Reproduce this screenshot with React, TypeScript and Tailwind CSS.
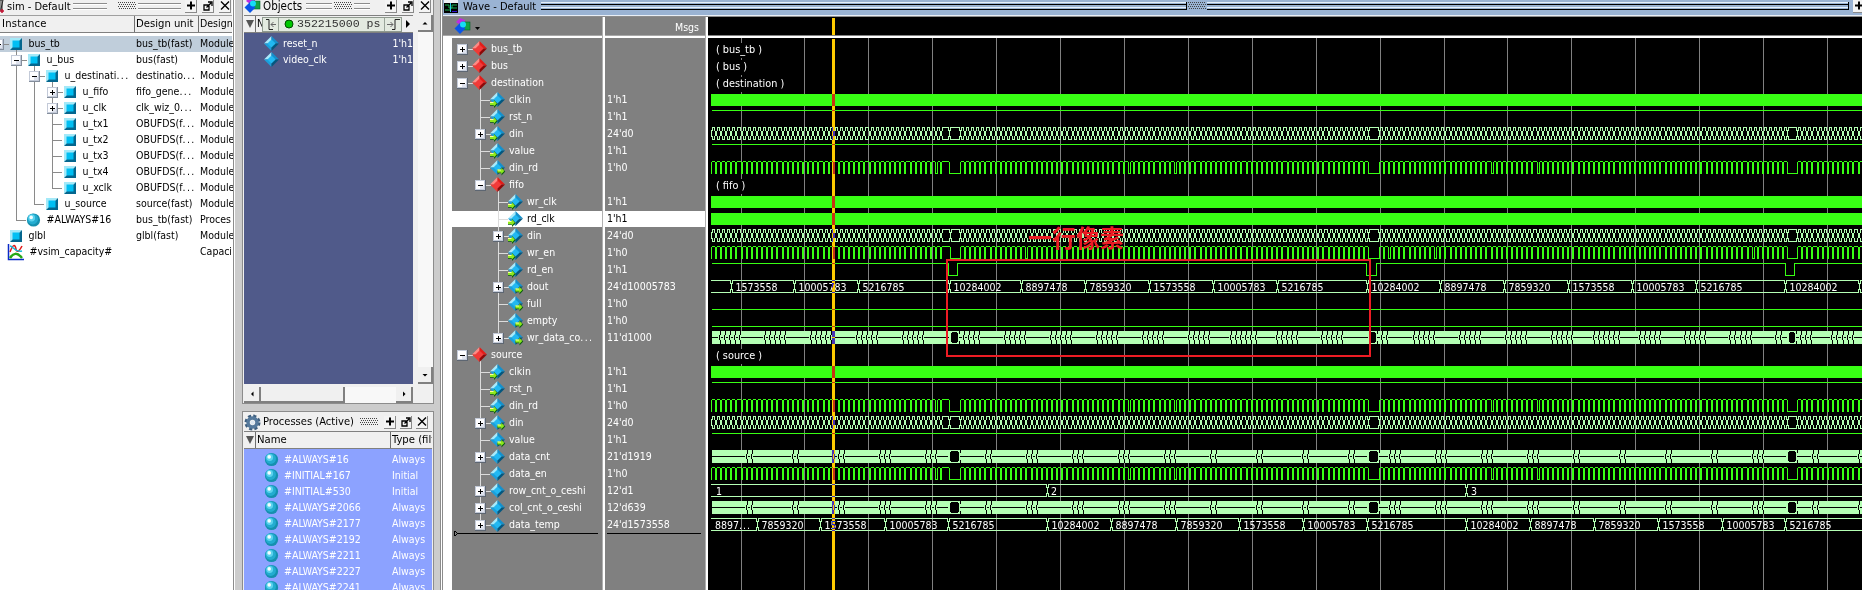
import React from "react";

type Guide = { full?: number[]; end?: number };

/* ---------- small shared pieces ---------- */

function Label({ text }: { text: string }) {
  if (!text.endsWith("...")) return <>{text}</>;
  return (
    <>
      {text.slice(0, -3)}
      <span className="tracking-[1.4px]">...</span>
    </>
  );
}

function Expander({ x, y, open, dark }: { x: number; y: number; open: boolean; dark?: boolean }) {
  return (
    <g shapeRendering="crispEdges">
      <rect x={x} y={y} width={11} height={11} rx={1} fill={dark ? "#5d6672" : "#848e9c"} />
      <rect x={x} y={y} width={10} height={10} fill="#c3cad8" />
      <rect x={x + 1} y={y + 1} width={8} height={8} fill="#fdfdff" />
      <rect x={x + 5} y={y + 6} width={4} height={3} fill="#dfe3ee" />
      <rect x={x + 3} y={y + 5} width={5} height={1} fill="#000" />
      {!open && <rect x={x + 5} y={y + 3} width={1} height={5} fill="#000" />}
    </g>
  );
}

function ModuleIcon({ x }: { x: number }) {
  return (
    <g>
      <path d={`M${x} 2h12l-12 12z`} fill="#a4e9f8" />
      <path d={`M${x + 12} 2v12h-12z`} fill="#04668e" />
      <rect x={x + 2.5} y={4.5} width={7} height={7} fill="#00bff3" />
    </g>
  );
}

function Ball({ cx, cy }: { cx: number; cy: number }) {
  return (
    <g>
      <circle cx={cx} cy={cy} r={6.6} fill="#1590ae" />
      <circle cx={cx - 0.8} cy={cy - 0.9} r={5.3} fill="#23acd0" />
      <circle cx={cx - 1.8} cy={cy - 2} r={3.4} fill="#5cd3ee" />
      <circle cx={cx - 2.3} cy={cy - 2.6} r={1.8} fill="#f2fdff" />
    </g>
  );
}

function Diamond({ x, y, kind }: { x: number; y: number; kind: "red" | "blue" | "in" | "out" }) {
  const c =
    kind === "red"
      ? { tl: "#ff8a84", tr: "#e31c18", bl: "#f03a34", br: "#8e0808", m: "#f23a3a" }
      : { tl: "#a8eafb", tr: "#1490cc", bl: "#1aa0dc", br: "#04577f", m: "#22b8f2" };
  return (
    <g>
      <path d={`M${x + 7.5} ${y}L${x} ${y + 7.5}h7.5z`} fill={c.tl} />
      <path d={`M${x + 7.5} ${y}L${x + 15} ${y + 7.5}h-7.5z`} fill={c.tr} />
      <path d={`M${x + 7.5} ${y + 15}L${x} ${y + 7.5}h7.5z`} fill={c.bl} />
      <path d={`M${x + 7.5} ${y + 15}L${x + 15} ${y + 7.5}h-7.5z`} fill={c.br} />
      <path d={`M${x + 7.5} ${y + 3.4}l4.1 4.1-4.1 4.1-4.1-4.1z`} fill={c.m} />
      {kind === "in" && <Arrow x={x} y={y + 8} />}
      {kind === "out" && <Arrow x={x + 7.5} y={y + 7.5} />}
    </g>
  );
}

function Arrow({ x, y }: { x: number; y: number }) {
  return (
    <g>
      <path d={`M${x} ${y + 2.5}h4v-2.5l3.8 4-3.8 4v-2.3h-4z`} fill="#0c5a12" />
      <path d={`M${x} ${y + 2}h3.8v-1.7l3 3.2-3 3v-1.6h-3.8z`} fill="#8eea1e" />
      <rect x={x} y={y + 2} width={3.5} height={1} fill="#fbff9c" />
    </g>
  );
}

function ShapesIcon({ className }: { className?: string }) {
  return (
    <svg width="17" height="17" viewBox="0 0 17 17" className={className}>
      <path d="M2 4l4-4 5 2v3l-5 2z" fill="#c02ce0" />
      <rect x="8" y="4" width="8" height="8" fill="#12a444" stroke="#055e28" strokeWidth=".6" />
      <path d="M6 5l5.500 5.500L6 16 .5 10.500z" fill="#0a55e8" />
      <circle cx="9" cy="6.500" r="3" fill="#16dcf6" />
    </svg>
  );
}

function TitleButton({ kind }: { kind: "plus" | "pop" | "close" }) {
  return (
    <div className="h-[13px] w-3 shrink-0 border-r border-b border-[#8a8a8a] bg-[#f4f4f4]">
      <svg width="12" height="12" viewBox="0 0 12 12" fill="none" stroke="#000">
        {kind === "plus" && <path d="M2 5.500h8M6 1.500v8" strokeWidth="2" />}
        {kind === "pop" && <path d="M2 5h5v5H2zM4.500 7.500L9 3M6 2h4v4" strokeWidth="1.300" />}
        {kind === "close" && <path d="M2 1.500l8 8M10 1.500l-8 8" strokeWidth="1.400" />}
      </svg>
    </div>
  );
}

function Grip({ className = "" }: { className?: string }) {
  return (
    <svg width="18" height="8" viewBox="0 0 18 8" className={`shrink-0 ${className}`} shapeRendering="crispEdges">
      {[0, 2, 4, 6].map((y) =>
        [0, 1, 2, 3, 4, 5, 6, 7, 8].map((i) => (
          <rect key={`${y}-${i}`} x={i * 2 + ((y / 2) % 2)} y={y} width={1} height={1} fill="#444" />
        )),
      )}
    </svg>
  );
}

function Rails({ className = "" }: { className?: string }) {
  return (
    <div className={`h-[6px] shrink-0 border-y border-[#8c8c8c] shadow-[0_1px_0_#fff] ${className}`}>
      <div className="h-px bg-white" />
    </div>
  );
}

/* ---------- sim panel ---------- */

const simRows: {
  name: string; unit: string; type: string; d: number;
  icon?: "ball" | "chart"; exp?: "-" | "+"; g?: Guide; hot?: boolean; child?: boolean;
}[] = [
  { name: "bus_tb", unit: "bus_tb(fast)", type: "Module", d: 0, exp: "-", hot: true, child: true },
  { name: "u_bus", unit: "bus(fast)", type: "Module", d: 1, exp: "-", g: { full: [16] }, child: true },
  { name: "u_destinati...", unit: "destinatio...", type: "Module", d: 2, exp: "-", g: { full: [16, 34] }, child: true },
  { name: "u_fifo", unit: "fifo_gene...", type: "Module", d: 3, exp: "+", g: { full: [16, 34, 52] } },
  { name: "u_clk", unit: "clk_wiz_0...", type: "Module", d: 3, exp: "+", g: { full: [16, 34, 52] } },
  { name: "u_tx1", unit: "OBUFDS(f...", type: "Module", d: 3, g: { full: [16, 34, 52] } },
  { name: "u_tx2", unit: "OBUFDS(f...", type: "Module", d: 3, g: { full: [16, 34, 52] } },
  { name: "u_tx3", unit: "OBUFDS(f...", type: "Module", d: 3, g: { full: [16, 34, 52] } },
  { name: "u_tx4", unit: "OBUFDS(f...", type: "Module", d: 3, g: { full: [16, 34, 52] } },
  { name: "u_xclk", unit: "OBUFDS(f...", type: "Module", d: 3, g: { full: [16, 34], end: 52 } },
  { name: "u_source", unit: "source(fast)", type: "Module", d: 2, g: { full: [16], end: 34 } },
  { name: "#ALWAYS#16", unit: "bus_tb(fast)", type: "Proces", d: 1, icon: "ball", g: { end: 16 } },
  { name: "glbl", unit: "glbl(fast)", type: "Module", d: 0 },
  { name: "#vsim_capacity#", unit: "", type: "Capaci", d: 0, icon: "chart" },
];

function SimPanel() {
  return (
    <section className="flex w-[234px] shrink-0 flex-col overflow-hidden border-r border-[#8c8c8c] bg-white pr-px">
      <div className="flex h-[15px] shrink-0 items-start bg-[#f0f0f0]">
        <svg width="7" height="14" className="shrink-0">
          <path d="M0 0h2v10H0zM3 0L1 9" stroke="#222" fill="#fff" />
          <path d="M0 11h4M2 9v4" stroke="#c01030" strokeWidth="1.500" />
        </svg>
        <span className="w-[66px] shrink-0 text-[11px] leading-[13px] whitespace-nowrap">sim - Default</span>
        <Rails className="mt-[3px] w-[34px]" />
        <Grip className="mt-[2px] ml-[11px]" />
        <Rails className="mt-[3px] ml-[2px] w-[43px]" />
        <div className="ml-[4px] flex gap-[5px]">
          <TitleButton kind="plus" />
          <TitleButton kind="pop" />
          <TitleButton kind="close" />
        </div>
      </div>
      <div className="flex h-[18px] shrink-0 items-center border-t border-b border-t-[#a0a0a0] border-b-[#808080] bg-[#f0f0f0] text-[11.2px]">
        <span className="flex h-full w-[135px] shrink-0 items-center border-r border-[#707070] pl-[2px] tracking-[0.25px]">Instance</span>
        <span className="flex h-full w-[64px] shrink-0 items-center border-r border-[#707070] pl-px whitespace-nowrap">Design unit</span>
        <span className="pl-px text-[10.5px] whitespace-nowrap">Design</span>
      </div>
      <div className="flex flex-col pt-[3px]">
        {simRows.map((r) => {
          const ix = 10 + 18 * r.d;
          const s = r.g?.full ? r.g.full[r.g.full.length - 1] : 0;
          return (
            <div key={r.name} className={r.hot ? "flex h-4 bg-[#c0cedb]" : "flex h-4"}>
              <div className="relative w-[136px] shrink-0">
                <svg width="134" height="16" className="absolute top-0 left-0 overflow-visible">
                  <g fill="#8a8a8a" shapeRendering="crispEdges">
                    {r.g?.full?.map((x) => <rect key={x} x={x} y={0} width={1} height={16} />)}
                    {r.g?.end && <rect x={r.g.end} y={0} width={1} height={8} />}
                    {r.g && <rect x={r.g.end ?? s} y={8} width={10} height={1} />}
                    {r.exp && <rect x={ix - 7} y={8} width={6} height={1} />}
                    {r.child && <rect x={ix + 6} y={13} width={1} height={3} />}
                  </g>
                  {r.exp && <Expander x={ix - 17} y={3} open={r.exp === "-"} />}
                  {!r.icon && <ModuleIcon x={ix} />}
                  {r.icon === "ball" && <Ball cx={33.5} cy={8} />}
                  {r.icon === "chart" && (
                    <g fill="none" strokeWidth="1.500">
                      <path d="M8.500 0v15.500H24" stroke="#0a2ac8" />
                      <path d="M10 8c3-8 5-8 6-3s4 1 6-3" stroke="#e01818" />
                      <path d="M10 2c3 0 5 7 12 5" stroke="#18b8d8" />
                      <path d="M10 14c3-5 7-6 12 0" stroke="#28a818" strokeWidth="2.500" />
                    </g>
                  )}
                </svg>
                <span className="block leading-[15px] whitespace-nowrap" style={{ paddingLeft: r.icon === "chart" ? 29.5 : ix + 18.5 }}>
                  <Label text={r.name} />
                </span>
              </div>
              <span className="w-[64px] shrink-0 leading-[15px] whitespace-nowrap"><Label text={r.unit} /></span>
              <span className="leading-[15px] whitespace-nowrap">{r.type}</span>
            </div>
          );
        })}
      </div>
    </section>
  );
}

/* ---------- objects + processes ---------- */

function ScrollButton({ dir, className }: { dir: "up" | "down" | "left" | "right"; className: string }) {
  const p = {
    up: "M4.500 8.500h5L7 6z",
    down: "M4.500 6h5L7 8.500z",
    left: "M8.500 4.500v5L6 7z",
    right: "M6 4.500v5L8.500 7z",
  }[dir];
  return (
    <div className={`flex shrink-0 items-center justify-center border-r-2 border-b-2 border-[#808080] bg-[#f0f0f0] ${className}`}>
      <svg width="14" height="14">
        <path d={p} fill="#000" />
      </svg>
    </div>
  );
}

function ObjectsPanel() {
  return (
    <section className="flex h-[404px] w-[192px] shrink-0 flex-col border-x border-b border-[#8c8c8c] bg-[#f0f0f0]">
      <div className="flex h-[15px] shrink-0 items-start">
        <ShapesIcon className="mt-[-3px] ml-px" />
        <span className="ml-[2px] w-[43px] text-[11.5px] leading-[13px]">Objects</span>
        <Rails className="mt-[3px] w-[26px]" />
        <Grip className="mx-[2px] mt-[2px]" />
        <Rails className="mt-[3px] w-[16px]" />
        <div className="ml-[15px] flex gap-[5px]">
          <TitleButton kind="plus" />
          <TitleButton kind="pop" />
          <TitleButton kind="close" />
        </div>
      </div>
      <div className="flex grow pl-px">
        <div className="flex w-[169px] flex-col overflow-hidden">
          <div className="flex h-[18px] shrink-0 items-center border-t border-b border-[#808080]">
            <span className="flex h-full w-[12px] shrink-0 items-center justify-center border-r border-[#707070]">
              <svg width="10" height="10"><path d="M1 1h8L5 9z" fill="#555" /></svg>
            </span>
            <span className="w-[6px] shrink-0 overflow-hidden pl-px">N</span>
            <div className="flex h-[15px] w-[140px] shrink-0 items-center border border-[#8f9a8f] bg-[#e3eae0]">
              <svg width="16" height="13" className="shrink-0 border-r border-[#9aa59a]" fill="none" stroke="#222">
                <path d="M3 1.500h3v10h4" />
                <path d="M13 6.500H8M10.500 4L8 6.500l2.500 2.500" stroke="#666" />
              </svg>
              <svg width="18" height="13" className="shrink-0"><circle cx="10" cy="6" r="4" fill="#00c800" stroke="#004a00" /></svg>
              <span className="w-[87px] shrink-0 font-['Liberation_Mono',monospace] text-[11.6px] leading-3 whitespace-nowrap text-[#333]">352215000 ps</span>
              <svg width="17" height="13" className="shrink-0 border-l border-[#9aa59a]" fill="none" stroke="#222">
                <path d="M7 11.500h3v-10h5" />
                <path d="M2 6.500h6M5.500 4L8 6.500 5.500 9" stroke="#666" />
              </svg>
            </div>
            <svg width="10" height="12" className="shrink-0"><path d="M4 2v8l4-4z" fill="#000" /></svg>
          </div>
          <div className="flex h-[351px] flex-col bg-[#505a8a] pt-[3px] text-white">
            {["reset_n", "video_clk"].map((n) => (
              <div key={n} className="flex h-4 pl-[20px]">
                <svg width="15" height="16" className="shrink-0"><Diamond x={0} y={0} kind="blue" /></svg>
                <span className="ml-[4px] w-[110px] leading-[15px]">{n}</span>
                <span className="leading-[15px] whitespace-nowrap">1'h1</span>
              </div>
            ))}
          </div>
          <div className="mt-[3px] flex h-[16px] bg-[#f8f8f8]">
            <ScrollButton dir="left" className="w-[17px]" />
            <div className="w-[84px] border-r-2 border-b-2 border-[#808080] bg-[#f0f0f0]" />
            <div className="grow" />
            <ScrollButton dir="right" className="w-[17px]" />
          </div>
        </div>
        <div className="ml-[5px] flex h-[369px] w-[15px] flex-col justify-between bg-[#f8f8f8]">
          <ScrollButton dir="up" className="h-[17px]" />
          <ScrollButton dir="down" className="h-[17px]" />
        </div>
      </div>
    </section>
  );
}

const processes: [string, string][] = [
  ["#ALWAYS#16", "Always"], ["#INITIAL#167", "Initial"], ["#INITIAL#530", "Initial"],
  ["#ALWAYS#2066", "Always"], ["#ALWAYS#2177", "Always"], ["#ALWAYS#2192", "Always"],
  ["#ALWAYS#2211", "Always"], ["#ALWAYS#2227", "Always"], ["#ALWAYS#2241", "Always"],
];

function ProcessesPanel() {
  return (
    <section className="mt-[7px] flex w-[192px] grow flex-col overflow-hidden border-x border-t border-[#8c8c8c] bg-[#f0f0f0]">
      <div className="flex h-[19px] shrink-0 items-center pt-px">
        <svg width="17" height="17" viewBox="0 0 17 17" className="ml-px shrink-0">
          <circle cx="8.500" cy="8.500" r="6.500" fill="none" stroke="#3c5c7c" strokeWidth="3" strokeDasharray="3 2.100" />
          <circle cx="8.500" cy="8.500" r="4.500" fill="none" stroke="#55799c" strokeWidth="3.500" />
          <circle cx="8.500" cy="8.500" r="2" fill="#dde8f2" />
        </svg>
        <span className="ml-[2px] w-[97px] shrink-0 text-[11.1px] leading-[14px] whitespace-nowrap">Processes (Active)</span>
        <Grip />
        <div className="ml-[6px] flex gap-[4px]">
          <TitleButton kind="plus" />
          <TitleButton kind="pop" />
          <TitleButton kind="close" />
        </div>
      </div>
      <div className="mr-px ml-px flex h-[18px] shrink-0 items-center overflow-hidden border-t border-b border-[#808080] text-[11.2px]">
        <span className="flex h-full w-[12px] shrink-0 items-center justify-center border-r border-[#707070]">
          <svg width="10" height="10"><path d="M1 1h8L5 9z" fill="#555" /></svg>
        </span>
        <span className="flex h-full w-[135px] shrink-0 items-center border-r border-[#707070] pl-px">Name</span>
        <span className="pl-px whitespace-nowrap">Type (filtered)</span>
      </div>
      <div className="mr-px ml-px flex grow flex-col bg-[#8ca2ff] pt-[2px] text-white">
        {processes.map(([n, t]) => (
          <div key={n} className="flex h-4 shrink-0 pl-[21px]">
            <svg width="14" height="16" className="shrink-0"><Ball cx={6.5} cy={8.5} /></svg>
            <span className="ml-[5px] w-[108px] shrink-0 leading-4">{n}</span>
            <span className="leading-4">{t}</span>
          </div>
        ))}
      </div>
    </section>
  );
}

/* ---------- wave window ---------- */

type Kind = "red" | "blue" | "in" | "out";
const signals: { name: string; val: string; d: number; kind: Kind; exp?: "+" | "-"; full?: number[]; end?: number }[] = [
  { name: "bus_tb", val: "", d: 0, kind: "red", exp: "+" },
  { name: "bus", val: "", d: 0, kind: "red", exp: "+" },
  { name: "destination", val: "", d: 0, kind: "red", exp: "-" },
  { name: "clkin", val: "1'h1", d: 1, kind: "in", full: [28] },
  { name: "rst_n", val: "1'h1", d: 1, kind: "in", full: [28] },
  { name: "din", val: "24'd0", d: 1, kind: "in", exp: "+", full: [28] },
  { name: "value", val: "1'h1", d: 1, kind: "in", full: [28] },
  { name: "din_rd", val: "1'h0", d: 1, kind: "out", full: [28] },
  { name: "fifo", val: "", d: 1, kind: "red", exp: "-", end: 28 },
  { name: "wr_clk", val: "1'h1", d: 2, kind: "in", full: [46] },
  { name: "rd_clk", val: "1'h1", d: 2, kind: "in", full: [46] },
  { name: "din", val: "24'd0", d: 2, kind: "in", exp: "+", full: [46] },
  { name: "wr_en", val: "1'h0", d: 2, kind: "in", full: [46] },
  { name: "rd_en", val: "1'h1", d: 2, kind: "in", full: [46] },
  { name: "dout", val: "24'd10005783", d: 2, kind: "out", exp: "+", full: [46] },
  { name: "full", val: "1'h0", d: 2, kind: "out", full: [46] },
  { name: "empty", val: "1'h0", d: 2, kind: "out", full: [46] },
  { name: "wr_data_co...", val: "11'd1000", d: 2, kind: "out", exp: "+", end: 46 },
  { name: "source", val: "", d: 0, kind: "red", exp: "-" },
  { name: "clkin", val: "1'h1", d: 1, kind: "in", full: [28] },
  { name: "rst_n", val: "1'h1", d: 1, kind: "in", full: [28] },
  { name: "din_rd", val: "1'h0", d: 1, kind: "in", full: [28] },
  { name: "din", val: "24'd0", d: 1, kind: "out", exp: "+", full: [28] },
  { name: "value", val: "1'h1", d: 1, kind: "out", full: [28] },
  { name: "data_cnt", val: "21'd1919", d: 1, kind: "blue", exp: "+", full: [28] },
  { name: "data_en", val: "1'h0", d: 1, kind: "blue", full: [28] },
  { name: "row_cnt_o_ceshi", val: "12'd1", d: 1, kind: "blue", exp: "+", full: [28] },
  { name: "col_cnt_o_ceshi", val: "12'd639", d: 1, kind: "blue", exp: "+", full: [28] },
  { name: "data_temp", val: "24'd1573558", d: 1, kind: "blue", exp: "+", end: 28 },
];

const G = "#38ff14";
const P = "#b4ffb4";
const LEFT = 711;
const RIGHT = 1862;
const top = (i: number) => 41 + 17 * i;

const px = (x: number, y: number, w: number, h: number) => `M${x} ${y}h${w}v${h}h${-w}z`;

const bursts: [number, number][] = [[715 - 5.12, 46], [964, 79], [1383, 79], [1801.2, 12]];
const rdIdle: [number, number][] = [[949, 960], [1368, 1379], [1787, 1797]];
const wrIdle: [number, number][] = [[950, 960], [1368, 1379], [1787, 1797]];

function pulses(): number[] {
  const out: number[] = [];
  bursts.forEach(([s, n]) => {
    for (let k = 0; k < n; k++) out.push(Math.round(s + 5.12 * k));
  });
  return out;
}

function enablePath(row: number, idle: [number, number][], wide: number[]) {
  const y = top(row);
  let d = px(LEFT, y + 2, 1, 12);
  let at = LEFT + 1;
  const ev: [number, number][] = pulses()
    .filter((x) => x > LEFT + 1)
    .map((x): [number, number] => [x, wide.some((v) => Math.abs(v - x) < 2.5) ? 3 : 2]);
  idle.forEach(([a, b]) => ev.push([a, b - a + 1]));
  ev.sort((a, b) => a[0] - b[0]);
  ev.forEach(([x, w]) => {
    if (x > at) d += px(at, y + 1, x - at, 1);
    if (w === 2) d += px(x, y + 2, 2, 12);
    else d += px(x, y + 2, 1, 12) + px(x + w - 1, y + 2, 1, 12) + px(x, y + 13, w, 1);
    at = x + w;
  });
  d += px(at, y + 1, RIGHT - at, 1);
  return d;
}

/* Fast bus: each short idle value shows as two touching transitions. */
function busBurstPath(row: number, idle: [number, number][]) {
  const y = top(row);
  const legs = (x: number) => px(x, y + 2, 1, 3) + px(x, y + 10, 1, 3);
  const rails = (a: number, b: number) => (b > a ? px(a, y + 1, b - a, 1) + px(a, y + 13, b - a, 1) : "");
  let d = px(LEFT, y + 4, 1, 7) + legs(LEFT + 1);
  let at = LEFT + 1;
  const ev: [number, number][] = pulses().filter((x) => x > LEFT + 2).map((x): [number, number] => [x, 0]);
  idle.forEach(([a, b]) => ev.push([a, b]));
  ev.sort((a, b) => a[0] - b[0]);
  ev.forEach(([x, b]) => {
    d += rails(at, x);
    if (!b) {
      d += legs(x - 1) + legs(x + 2) + px(x, y + 5, 2, 5);
      at = x + 2;
    } else {
      d += legs(x - 1) + px(x, y + 4, 1, 7) + legs(x + 1) + rails(x + 1, b);
      d += legs(b - 1) + px(b, y + 4, 1, 7) + legs(b + 1);
      at = b + 1;
    }
  });
  return d + rails(at, RIGHT);
}

function DenseBus({ row, groups, blobs }: { row: number; groups: [number, number][]; blobs: [number, number][] }) {
  const y = top(row);
  let dark = "";
  let light = "";
  groups.forEach(([s, n]) => {
    for (let k = 0; k < n; k++) {
      const x = Math.round(s + 5.1 * k);
      light += px(x, y + 7, 1, 1) + px(x - 2, y + 7, 1, 1);
      dark += px(x, y + 1, 1, 4) + px(x, y + 10, 1, 4) + px(x - 1, y + 5, 1, 5);
    }
  });
  blobs.forEach(([a, b]) => {
    light += px(a - 2, y + 7, b - a + 3, 1);
    dark += px(a, y + 3, b - a, 9) + px(a + 1, y + 2, b - a - 2, 11) + px(b + 1, y + 1, 1, 3) + px(b + 1, y + 11, 1, 3);
  });
  return (
    <g>
      <path d={px(712, y + 1, RIGHT - 712, 13)} fill={P} />
      <path d={px(712, y + 7, RIGHT - 712, 1)} fill="#000" />
      <path d={light} fill={P} />
      <path d={dark} fill="#000" />
    </g>
  );
}

function ValueBus({ row, cuts, labels }: { row: number; cuts: number[]; labels: [number, string][] }) {
  const y = top(row);
  let d = "";
  let at = LEFT;
  cuts.forEach((c) => {
    const x = Math.round(c) - 1;
    d += px(at, y + 1, x - at, 1) + px(at, y + 13, x - at, 1);
    d += px(x, y + 1, 1, 4) + px(x, y + 10, 1, 4) + px(x + 1, y + 4, 1, 7) + px(x + 2, y + 1, 1, 4) + px(x + 2, y + 10, 1, 4);
    at = x + 2;
  });
  d += px(at, y + 1, RIGHT - at, 1) + px(at, y + 13, RIGHT - at, 1);
  return (
    <g>
      <path d={d} fill={P} />
      {labels.map(([x, t]) => (
        <text key={x} x={x} y={y + 12} fill="#fff">{t}</text>
      ))}
    </g>
  );
}

const grid = [741, 804, 868, 932, 996, 1060, 1124, 1188, 1252, 1316, 1380, 1444, 1507, 1571, 1635, 1699, 1763, 1827];
const seq = ["10284002", "8897478", "7859320", "1573558", "10005783", "5216785"];

const doutCuts = [731, 794, 858, 949, 1021, 1085, 1149, 1213, 1277, 1367, 1440, 1504, 1568, 1632, 1696, 1785, 1859];
const doutLabels = doutCuts.slice(0, 16).map((x, i): [number, string] => [x + 4.5, seq[(i + 3) % 6]]);
const tempCuts = [757, 820, 885, 948, 1047, 1111, 1176, 1239, 1303, 1367, 1466, 1530, 1594, 1658, 1722, 1785];
const tempLabels = tempCuts.map((x, i): [number, string] => [x + 4.5, seq[(i + 2) % 6]]);

const countGroups: [number, number][] = [
  [720, 5], [765, 5], [811, 5], [857, 5], [903, 5], [964, 4], [1004.7, 5], [1050.7, 5], [1096.7, 5], [1142.7, 5],
  [1189, 5], [1230.7, 6], [1276.7, 5], [1321.7, 5], [1382, 2], [1413.7, 5], [1459.7, 5], [1505.7, 5],
  [1551.7, 5], [1593.7, 6], [1639.7, 5], [1684.7, 5], [1730.3, 5], [1776.3, 2], [1801, 3], [1832.3, 5],
];
const cntGroups: [number, number][] = [
  [746.7, 2], [792.7, 2], [834, 3], [880, 3], [926, 3], [985.7, 2], [1027, 3], [1073, 3], [1119, 3], [1165, 3],
  [1211, 2], [1256.7, 2], [1303, 2], [1349, 2], [1390, 3], [1436, 3], [1482, 3], [1528, 3], [1574, 2], [1620, 2],
  [1666, 2], [1712, 2], [1753, 3], [1812.7, 2], [1858.7, 1],
];
const cntBlobs: [number, number][] = [[950, 959], [1369, 1378], [1788, 1796]];

function rdEnPath() {
  const y = top(13);
  let d = "";
  let at = 712;
  [[948, 957], [1366, 1376], [1785, 1794]].forEach(([a, b]) => {
    d += px(at, y + 1, a - at, 1) + px(a, y + 1, 1, 13) + px(a, y + 13, b - a, 1) + px(b, y + 1, 1, 13);
    at = b;
  });
  return d + px(at, y + 1, RIGHT - at, 1);
}

function WaveCanvas() {
  const wideRd = [934, 1128, 1174, 1491, 1537];
  const wideWr = [1026, 1389, 1435, 1752];
  return (
    <svg width="1154" height="552" viewBox="708 38 1154 552" className="block shrink-0 bg-black" shapeRendering="crispEdges">
      {grid.map((x) => (
        <rect key={x} x={x} y={38} width={1} height={552} fill="#808080" />
      ))}
      {([[0, "( bus_tb )"], [1, "( bus )"], [2, "( destination )"], [8, "( fifo )"], [18, "( source )"]] as [number, string][]).map(([r, t]) => (
        <g key={r}>
          <rect x={714} y={top(r) + 2} width={t.length * 5 + 6} height={15} fill="#000" />
          <text x={716} y={top(r) + 12} fill="#fff" fontSize={10.8}>{t}</text>
        </g>
      ))}
      {[3, 9, 10, 19].map((r) => (
        <rect key={r} x={711} y={top(r) + 2} width={1151} height={12} fill={G} />
      ))}
      {[4, 6, 20, 23].map((r) => (
        <rect key={r} x={712} y={top(r) + 1} width={1150} height={1} fill={G} />
      ))}
      {[15, 16].map((r) => (
        <rect key={r} x={712} y={top(r) + 13} width={1150} height={1} fill={G} />
      ))}
      <path
        d={enablePath(7, rdIdle, wideRd) + enablePath(21, rdIdle, wideRd) + enablePath(25, rdIdle, wideRd) + enablePath(12, wrIdle, wideWr) + rdEnPath()}
        fill={G}
      />
      <path d={busBurstPath(5, rdIdle) + busBurstPath(22, rdIdle) + busBurstPath(11, wrIdle)} fill={P} />
      <ValueBus row={14} cuts={doutCuts} labels={doutLabels} />
      <ValueBus row={26} cuts={[1047, 1466]} labels={[[716, "1"], [1051, "2"], [1471, "3"]]} />
      <ValueBus row={28} cuts={tempCuts} labels={[...tempLabels]} />
      <text x={715} y={top(28) + 12} fill="#fff"><Label2 /></text>
      <DenseBus row={17} groups={countGroups} blobs={[[951, 958], [1370, 1376], [1789, 1795]]} />
      <DenseBus row={24} groups={cntGroups} blobs={cntBlobs} />
      <DenseBus row={27} groups={cntGroups} blobs={cntBlobs} />
      <rect x={832} y={39} width={3} height={551} fill="#ffcc00" className="mix-blend-difference" />
    </svg>
  );
}

function Label2() {
  return (
    <>
      8897<tspan className="tracking-[1px]">...</tspan>
    </>
  );
}

function TitleRails({ className }: { className: string }) {
  return (
    <div className={`mt-[2px] flex h-2 shrink-0 flex-col justify-between border-r border-black ${className}`}>
      <div className="h-[3px] border-t border-b border-t-[#e6f0fa] border-b-black" />
      <div className="h-[3px] border-t border-b border-t-[#e6f0fa] border-b-black" />
    </div>
  );
}

function WaveTitle() {
  return (
    <div className="flex h-4 shrink-0 items-start overflow-hidden border-b border-[#e8eef6] bg-[#9ab3d3]">
      <svg width="16" height="14" className="shrink-0">
        <rect x="1" y="0" width="14" height="3" fill="#eef0f4" />
        <rect x="1" y="3" width="14" height="10" fill="#000" />
        <path d="M2 5h4v3h3V5h5M2 10h5M8 8h6" stroke="#18b050" fill="none" />
        <path d="M7.500 3v9" stroke="#28c8e8" />
        <path d="M9 11.500h5" stroke="#3010d0" />
      </svg>
      <span className="ml-[4px] w-[78px] shrink-0 text-[11px] leading-[13px] whitespace-nowrap">Wave - Default</span>
      <TitleRails className="w-[646px]" />
      <Grip className="mx-px mt-[2px]" />
      <TitleRails className="w-[642px]" />
      <div className="ml-[4px]"><TitleButton kind="plus" /></div>
    </div>
  );
}

function WavePanel() {
  return (
    <section className="relative flex grow flex-col overflow-hidden bg-white">
      <WaveTitle />
      <div className="flex h-[22px] shrink-0 border-t border-[#8c8c8c]">
        <div className="flex h-[19px] w-[159px] shrink-0 items-center border-b border-[#a8a8a8] bg-[#808080] pl-[11px]">
          <ShapesIcon />
          <svg width="8" height="6" className="mt-[6px] ml-[3px]"><path d="M1 1h5L3.500 4z" fill="#000" /></svg>
        </div>
        <div className="w-[3px] shrink-0 border-l border-[#b0b0b0] bg-white" />
        <div className="h-[19px] w-[100px] shrink-0 border-b border-[#a8a8a8] bg-[#808080] pr-[6px] text-right leading-[20px] text-white">Msgs</div>
        <div className="w-[3px] shrink-0 border-l border-[#b0b0b0] bg-white" />
        <div className="h-[19px] grow border-b border-[#808080] bg-black pl-[124px]">
          <div className="mt-px h-[17px] w-[3px] bg-[#ffcc00]" />
        </div>
      </div>
      <div className="flex grow">
        <div className="ml-[9px] flex w-[150px] shrink-0 flex-col bg-[#808080] pt-[3px] text-white">
          {signals.map((s, i) => {
            const ix = 20 + 18 * s.d;
            const gx = s.end ?? (s.full ? s.full[0] : 0);
            return (
              <div key={i} className="relative h-[17px] shrink-0">
                {i === 10 && <div className="absolute inset-x-0 top-0 h-4 bg-white" />}
                <svg width="150" height="17" className="absolute top-0 left-0 overflow-visible">
                  <g fill="#dcdcdc" shapeRendering="crispEdges">
                    {s.full?.map((x) => <rect key={x} x={x} y={0} width={1} height={17} />)}
                    {s.end && <rect x={s.end} y={0} width={1} height={8} />}
                    {gx > 0 && <rect x={gx} y={8} width={10} height={1} />}
                    {s.exp && <rect x={ix - 5} y={8} width={6} height={1} />}
                    {s.exp === "-" && <rect x={ix + 8} y={12} width={1} height={5} />}
                  </g>
                  {s.exp && <Expander x={ix - 15} y={3} open={s.exp === "-"} dark />}
                  <Diamond x={ix} y={0} kind={s.kind} />
                </svg>
                <span
                  className={i === 10 ? "relative block leading-[15px] whitespace-nowrap text-black" : "relative block leading-[15px] whitespace-nowrap"}
                  style={{ paddingLeft: ix + 19 }}
                >
                  <Label text={s.name} />
                </span>
              </div>
            );
          })}
          <svg width="150" height="5" className="-mt-[3px] shrink-0" shapeRendering="crispEdges">
            <path d="M2.500 0v5l3-2.500z" stroke="#000" fill="none" />
            <rect x="5" y="2" width="141" height="1" />
          </svg>
        </div>
        <div className="w-[3px] shrink-0 border-l border-[#b0b0b0] bg-white" />
        <div className="flex w-[100px] shrink-0 flex-col bg-[#808080] pt-[3px] text-white">
          {signals.map((s, i) => (
            <div key={i} className="h-[17px] shrink-0">
              <div className={i === 10 ? "h-4 bg-white pl-[2px] leading-[15px] text-black" : "h-4 pl-[2px] leading-[15px]"}>{s.val}</div>
            </div>
          ))}
          <div className="-mt-px ml-[2px] h-px w-[94px] bg-black" />
        </div>
        <div className="w-[3px] shrink-0 border-l border-[#b0b0b0] bg-white" />
        <WaveCanvas />
      </div>
      <div className="absolute top-[259px] left-[503px] h-[98px] w-[425px] border-2 border-[#ed1c24]" />
      <div className="absolute top-[222px] left-[585px] font-['Noto_Sans_CJK_SC',sans-serif] text-[24px] leading-[30px] font-bold whitespace-nowrap text-[#ed1c24]">
        一行像素
      </div>
    </section>
  );
}

export default function App() {
  return (
    <main className="flex h-[590px] w-[1862px] overflow-hidden bg-[#cccccc] font-['DejaVu_Sans_Condensed','DejaVu_Sans',sans-serif] text-[10.5px] font-stretch-condensed text-black">
      <SimPanel />
      <div className="w-[8px] shrink-0 border-l border-white" />
      <div className="flex w-[192px] shrink-0 flex-col">
        <ObjectsPanel />
        <ProcessesPanel />
      </div>
      <div className="w-[6px] shrink-0" />
      <div className="w-[3px] shrink-0 border-x border-[#8c8c8c] bg-white" />
      <WavePanel />
    </main>
  );
}
